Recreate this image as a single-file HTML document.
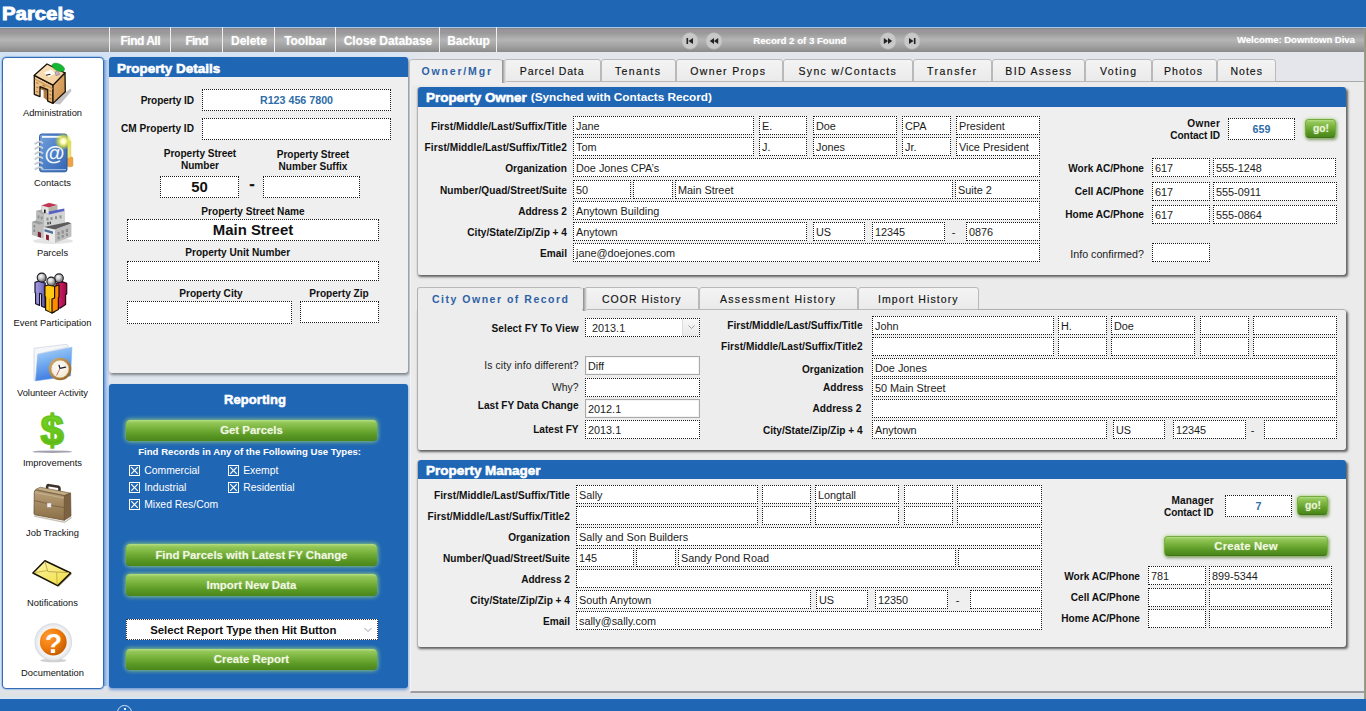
<!DOCTYPE html>
<html><head><meta charset="utf-8"><title>Parcels</title>
<style>
html,body{margin:0;padding:0;}
body{width:1366px;height:711px;overflow:hidden;background:#e4e4e4;font-family:"Liberation Sans",sans-serif;font-size:11px;color:#000;}
#root{position:relative;width:1366px;height:711px;overflow:hidden;background:#dfe6ee;}
#root div{position:absolute;box-sizing:border-box;white-space:nowrap;}
.f{border:1px dotted #1a1a1a;background:#fff;font-size:10.85px;color:#1c1c1c;padding-left:2px;padding-top:1px;overflow:hidden;}
.fs{border:1px solid #a9a9a9;box-shadow:inset 0 0 0 1px #f4f4f4;background:#fff;font-size:10.85px;color:#1c1c1c;padding-left:2px;padding-top:1px;overflow:hidden;}
.fc{text-align:center;padding-left:0;}
.lb{font-size:11px;font-weight:bold;color:#111;}
.ln{font-size:11px;font-weight:normal;color:#111;}
.hv{font-weight:bold;-webkit-text-stroke:0.55px currentColor;}
.ph{background:#1f66b5;color:#fff;border-radius:3px 3px 0 0;}
.pb{background:#efefef;}
.gb{color:#fff;font-weight:bold;font-size:12px;text-align:center;border-radius:4px;
 background:linear-gradient(#b6de86 0%,#94c85a 12%,#78b23c 40%,#5c9a26 70%,#4a861a 100%);
 box-shadow:0 0 4px 1px rgba(170,225,110,0.75);text-shadow:0 0 2px rgba(255,255,255,0.35);}
.gb2{box-shadow:0 0 3px 1px rgba(150,205,95,.55),1px 2px 3px rgba(50,80,25,.55);border:1px solid rgba(120,175,70,.9);border-bottom-color:#3f7416;}
.tab{border:1px solid #b9b9b9;border-radius:3px 3px 0 0;background:linear-gradient(#f4f4f4,#eaeaea);}
.tb{height:25px;top:27px;border-left:1px solid #efefef;}
</style></head><body><div id="root">
<div style="left:0px;top:0px;width:1366px;height:27px;background:#1f66b5;"></div>
<div class="hv" style="left:2px;top:2px;height:24px;line-height:24px;font-size:18px;color:#fff;transform-origin:0 50%;transform:scaleX(1.13);-webkit-text-stroke:0.9px #fff;">Parcels</div>
<div style="left:0px;top:27px;width:1366px;height:25px;background:linear-gradient(#a9c9e8 0,#a9c9e8 1px,#808a84 1px,#9d939d 3px,#999 6px,#b5b5b5 13px,#a2a2a2 19px,#8a8a8a 25px);"></div>
<div class="tb" style="left:109px;width:61px;"></div>
<div style="left:120.50px;top:33px;height:16px;line-height:16px;font-size:12px;font-weight:bold;letter-spacing:-0.507px;color:#fff;text-shadow:0 0 2px rgba(255,255,255,.45);">Find All</div>
<div class="tb" style="left:170px;width:52px;"></div>
<div style="left:185.50px;top:33px;height:16px;line-height:16px;font-size:12px;font-weight:bold;letter-spacing:-0.775px;color:#fff;text-shadow:0 0 2px rgba(255,255,255,.45);">Find</div>
<div class="tb" style="left:222px;width:52px;"></div>
<div style="left:231.00px;top:33px;height:16px;line-height:16px;font-size:12px;font-weight:bold;letter-spacing:-0.004px;color:#fff;text-shadow:0 0 2px rgba(255,255,255,.45);">Delete</div>
<div class="tb" style="left:274px;width:61px;"></div>
<div style="left:284.25px;top:33px;height:16px;line-height:16px;font-size:12px;font-weight:bold;letter-spacing:-0.101px;color:#fff;text-shadow:0 0 2px rgba(255,255,255,.45);">Toolbar</div>
<div class="tb" style="left:335px;width:104px;"></div>
<div style="left:343.75px;top:33px;height:16px;line-height:16px;font-size:12px;font-weight:bold;letter-spacing:-0.067px;color:#fff;text-shadow:0 0 2px rgba(255,255,255,.45);">Close Database</div>
<div class="tb" style="left:439px;width:57px;"></div>
<div style="left:447.25px;top:33px;height:16px;line-height:16px;font-size:12px;font-weight:bold;letter-spacing:-0.170px;color:#fff;text-shadow:0 0 2px rgba(255,255,255,.45);">Backup</div>
<div class="tb" style="left:496px;width:1px;"></div>
<div style="left:681px;top:32px;width:18px;height:18px;"><svg width="18" height="18" viewBox="0 0 18 18" style="position:absolute;left:0;top:0"><circle cx="9" cy="9" r="8.2" fill="#c9c9c9" stroke="#b4b4b4" stroke-width="0.8"/><rect x="5.5" y="6" width="1.6" height="6" fill="#222"/><path d="M12 6 L7.5 9 L12 12Z" fill="#222"/></svg></div>
<div style="left:705px;top:32px;width:18px;height:18px;"><svg width="18" height="18" viewBox="0 0 18 18" style="position:absolute;left:0;top:0"><circle cx="9" cy="9" r="8.2" fill="#c9c9c9" stroke="#b4b4b4" stroke-width="0.8"/><path d="M9 6 L4.8 9 L9 12Z M13.2 6 L9 9 L13.2 12Z" fill="#222"/></svg></div>
<div style="left:879px;top:32px;width:18px;height:18px;"><svg width="18" height="18" viewBox="0 0 18 18" style="position:absolute;left:0;top:0"><circle cx="9" cy="9" r="8.2" fill="#c9c9c9" stroke="#b4b4b4" stroke-width="0.8"/><path d="M9 6 L13.2 9 L9 12Z M4.8 6 L9 9 L4.8 12Z" fill="#222"/></svg></div>
<div style="left:903px;top:32px;width:18px;height:18px;"><svg width="18" height="18" viewBox="0 0 18 18" style="position:absolute;left:0;top:0"><circle cx="9" cy="9" r="8.2" fill="#c9c9c9" stroke="#b4b4b4" stroke-width="0.8"/><rect x="10.9" y="6" width="1.6" height="6" fill="#222"/><path d="M6 6 L10.5 9 L6 12Z" fill="#222"/></svg></div>
<div style="left:753.20px;top:34px;height:13px;line-height:13px;font-size:9.7px;font-weight:bold;letter-spacing:-0.021px;color:#fff;text-shadow:0 0 2px rgba(255,255,255,.4);">Record 2 of 3 Found</div>
<div style="left:1237.00px;top:33.5px;height:12px;line-height:12px;font-size:9.6px;font-weight:bold;letter-spacing:-0.062px;color:#fff;text-shadow:0 0 2px rgba(255,255,255,.4);">Welcome: Downtown Diva</div>
<div style="left:0px;top:52px;width:1366px;height:30px;background:linear-gradient(90deg,#d3e2f5 0,#d8e5f4 29%,#e3e6ea 31%,#e4e6ec 100%);"></div>
<div style="left:0px;top:688px;width:1366px;height:11px;background:linear-gradient(#e0e4ea 0,#dfe1e4 60%,#d6e6f2 100%);"></div>
<div style="left:0px;top:699px;width:1366px;height:12px;background:#1f66b5;"></div>
<div style="left:117px;top:705px;width:15px;height:15px;border:1.5px solid #d4e4f8;border-radius:50%;"></div>
<div style="left:123.5px;top:708px;width:2px;height:2px;background:#e8f0fa;"></div>
<div style="left:1364px;top:28px;width:2px;height:671px;background:linear-gradient(90deg,#a0a28e,#8e907e);z-index:5;"></div>
<div style="left:1px;top:56px;width:104px;height:634px;border-radius:6px;background:rgba(120,170,225,0.35);"></div>
<div style="left:104px;top:60px;width:5px;height:626px;background:linear-gradient(90deg,#5e90d4,#9dbdea 35%,#c6d6f0 75%,#d4dff0);"></div>
<div style="left:2px;top:57px;width:102px;height:632px;background:#fff;border:1px solid #346cb4;border-radius:4px;box-shadow:0 0 2px #7fb0e6;"></div>
<div style="left:22px;top:58px;width:62px;height:50px;"><svg width="62" height="50" viewBox="0 0 62 50" style="display:block">
<defs><linearGradient id="wd1" x1="0" y1="0" x2="1" y2="1"><stop offset="0" stop-color="#fbe6c6"/><stop offset="1" stop-color="#f0c890"/></linearGradient>
<linearGradient id="wd2" x1="0" y1="0" x2="0" y2="1"><stop offset="0" stop-color="#f2cc98"/><stop offset="1" stop-color="#e2b070"/></linearGradient>
<linearGradient id="wd3" x1="0" y1="0" x2="1" y2="1"><stop offset="0" stop-color="#e6b474"/><stop offset="1" stop-color="#c88a48"/></linearGradient></defs>
<path d="M32 45.6 L43.4 34.2 L48.8 30.6 L49.4 33 L38 46.4Z" fill="#b4b4b8" opacity=".8"/>
<path d="M21.6 30.2 L25.7 31.8 L25.7 43 L21.6 39.6Z" fill="#b07c3c"/><path d="M18 28.8 L25.7 31.8 L25.7 34 L18 31Z" fill="#9c6a30"/>
<path d="M12.3 17.3 L31 27.1 L31 45.4 L25.7 43.1 L25.7 31.6 L18 28.6 L18 38.6 L12.3 36.3Z" fill="url(#wd2)" stroke="#1c1208" stroke-width="1.3" stroke-linejoin="round"/>
<path d="M31 27.1 L43 14.8 L43.3 33.8 L31 45.4Z" fill="url(#wd3)" stroke="#1c1208" stroke-width="1.3" stroke-linejoin="round"/>
<path d="M12.3 17.3 L25 6 L43 14.8 L31 27.1Z" fill="url(#wd1)" stroke="#1c1208" stroke-width="1.3" stroke-linejoin="round"/>
<path d="M12.8 21 L30.6 30.6" stroke="#c89858" stroke-width="1.2"/>
<path d="M22 14.5 L29 11.5 L33.5 15.5 L26.5 19Z" fill="#fff" opacity=".9"/>
<path d="M24 17.3 L28.4 16.3" stroke="#222" stroke-width="1.1"/>
<ellipse cx="36.3" cy="9.3" rx="6.6" ry="3.4" transform="rotate(24 36.3 9.3)" fill="#14b830" stroke="#0c9424" stroke-width=".6"/>
<path d="M33.2 14 L36 12.6 L37.6 16.6 L34 17.6Z" fill="#c4b4c4" stroke="#7a6a7a" stroke-width=".5"/>
<path d="M14.3 24.6 L16.3 25.6 M14.3 29 L16.3 30 M14.3 33.2 L16.3 34.2 M27.4 36.3 L29.4 37.3 M27.4 40 L29.4 41 M27.4 32.6 L29.4 33.6 M20.4 27 L23.4 28.4" stroke="#a87838" stroke-width="1.1"/>
</svg></div>
<div style="left:22px;top:128px;width:62px;height:50px;"><svg width="62" height="50" viewBox="0 0 62 50" style="display:block">
<defs><linearGradient id="bk" x1="0" y1="0" x2="1" y2="1"><stop offset="0" stop-color="#74a2dc"/><stop offset=".5" stop-color="#4e80c8"/><stop offset="1" stop-color="#3566b4"/></linearGradient>
<radialGradient id="sp"><stop offset="0" stop-color="#fff"/><stop offset=".3" stop-color="#fdf9b0"/><stop offset=".6" stop-color="#dde23a" stop-opacity=".75"/><stop offset="1" stop-color="#c8dc30" stop-opacity="0"/></radialGradient></defs>
<rect x="45" y="29" width="5.8" height="9.6" rx="1.4" fill="#f0a244" stroke="#d48820" stroke-width=".6"/>
<rect x="44" y="13" width="4.8" height="17" rx="1.4" fill="#ece468" stroke="#c8c040" stroke-width=".5"/>
<rect x="17.6" y="6" width="27.4" height="37.8" rx="2.2" fill="url(#bk)" stroke="#2c5aa2" stroke-width="1"/>
<path d="M19.5 41.6 L44 41.6" stroke="#9ab8e0" stroke-width="1.2"/>
<path d="M20 8.9 L39.6 8.9" stroke="#f4f8fc" stroke-width="1.8"/>
<g fill="none" stroke="#d4d8dc" stroke-width="1.7" stroke-linecap="round"><path d="M13 15.5 q4 -3.4 7.4 -.6"/><path d="M13 20.6 q4 -3.4 7.4 -.6"/><path d="M13 25.7 q4 -3.4 7.4 -.6"/><path d="M13 30.8 q4 -3.4 7.4 -.6"/><path d="M13 35.9 q4 -3.4 7.4 -.6"/><path d="M13 41 q4 -3.4 7.4 -.6"/></g>
<g fill="none" stroke="#8a96a4" stroke-width=".5"><path d="M13 16.4 q4 -3.4 7.4 -.6"/><path d="M13 21.5 q4 -3.4 7.4 -.6"/><path d="M13 26.6 q4 -3.4 7.4 -.6"/><path d="M13 31.7 q4 -3.4 7.4 -.6"/><path d="M13 36.8 q4 -3.4 7.4 -.6"/><path d="M13 41.9 q4 -3.4 7.4 -.6"/></g>
<text x="32.4" y="32.4" font-family="Liberation Sans" font-weight="bold" font-size="20.5" fill="#f2f7fd" text-anchor="middle">@</text>
<circle cx="41.4" cy="13.4" r="8.6" fill="url(#sp)"/>
</svg></div>
<div style="left:22px;top:198px;width:62px;height:50px;"><svg width="62" height="50" viewBox="0 0 62 50" style="display:block">
<ellipse cx="31" cy="43" rx="20" ry="3" fill="#d8d8d8" opacity=".7"/>
<path d="M14 13 L22 11 L22 40 L14 36Z" fill="#c4c4c4"/><path d="M14 13 L22 11 L30 14 L22 17Z" fill="#a8a8a8"/>
<path d="M22 16 L43 12.5 L43 27 L22 30Z" fill="#d2d4d4"/>
<path d="M14.5 15 L22 17.5 L22 29 L14.5 26.5Z" fill="#b9bbbb"/>
<path d="M19.7 7.5 L27 5 L35.2 7 L35.2 13.5 L26.5 16 L19.7 14Z" fill="#e4e4e4" stroke="#9a9a9a" stroke-width=".4"/>
<path d="M19.7 7.4 L27 5 L35.2 7 L27 9.6Z" fill="#c23452"/>
<path d="M26.6 9.8 L35.2 7.2 L35.2 13.5 L26.6 16Z" fill="#b4b4a8"/>
<rect x="22" y="11.6" width="1.6" height="3.2" fill="#111"/>
<path d="M26.8 13.6 L42.3 10.4 L42.3 13 L26.8 16.4Z" fill="#5661c4"/>
<path d="M9.9 24 L14 22.4 L21.8 25 L21.8 40.8 L9.9 37Z" fill="#bcbcbc"/>
<path d="M9.9 24 L14 22.4 L21.8 25 L17.5 26.6Z" fill="#9c9c9c"/>
<path d="M15.8 33.6 L19 34.7 L19 39.8 L15.8 38.7Z" fill="#7c2034"/>
<path d="M21.8 29 L46 24 L49.3 25.5 L49.3 38.5 L33 45 L21.8 40.8Z" fill="#e0e0e0"/>
<path d="M21.8 29 L46 24 L49.3 25.5 L33 31.6Z" fill="#5c5c5c"/>
<path d="M33 31.6 L49.3 25.5 L49.3 38.5 L33 45Z" fill="#bdbdbd"/>
<path d="M21.8 29.4 L33 32 L33 45 L21.8 40.8Z" fill="#ececec"/>
<path d="M22.5 31 L31 33.4 L31 36 L22.5 33.6Z" fill="#51709c"/>
<path d="M24 36.4 L26.9 37.3 L26.9 42.6 L24 41.6Z" fill="#8a1c30"/>
<g fill="#8e9090"><rect x="15.6" y="17.5" width="1.8" height="2.8"/><rect x="18.8" y="18.6" width="1.8" height="2.8"/><rect x="24.5" y="19.6" width="2" height="3"/><rect x="28.5" y="19" width="2" height="3"/><rect x="33" y="18.2" width="2" height="3"/><rect x="37.5" y="17.4" width="2" height="3"/><rect x="25.3" y="24" width="1.4" height="2.6" fill="#444"/><rect x="27.6" y="23.6" width="1.4" height="2.6" fill="#444"/>
<rect x="35.5" y="34" width="2.2" height="3.2"/><rect x="39.6" y="32.4" width="2.2" height="3.2"/><rect x="43.8" y="30.8" width="2.2" height="3.2"/><rect x="35.5" y="38.6" width="2.2" height="2.6"/><rect x="39.6" y="37" width="2.2" height="2.6"/><rect x="43.8" y="35.4" width="2.2" height="2.6"/><rect x="11.4" y="27" width="1.8" height="2.6"/><rect x="11.4" y="31.4" width="1.8" height="2.6"/></g>
</svg></div>
<div style="left:22px;top:268px;width:62px;height:50px;"><svg width="62" height="50" viewBox="0 0 62 50" style="display:block">
<defs><radialGradient id="hd" cx=".4" cy=".35"><stop offset="0" stop-color="#fafafa"/><stop offset=".6" stop-color="#c8c8c8"/><stop offset="1" stop-color="#8a8a8a"/></radialGradient>
<linearGradient id="p1" x1="0" x2="1"><stop offset="0" stop-color="#a8a0e4"/><stop offset=".7" stop-color="#8076c8"/><stop offset="1" stop-color="#564c9c"/></linearGradient>
<linearGradient id="p3" x1="0" x2="1"><stop offset="0" stop-color="#f25aa2"/><stop offset=".35" stop-color="#c81c64"/><stop offset="1" stop-color="#9a0c40"/></linearGradient></defs>
<path d="M13 14.4 L17 13 L23.2 15 L23.2 39.6 L19.6 38.2 L19.6 26 L17.6 25.4 L17.6 37.4 L13.6 35.8 L13.6 25 L13 24.6Z" fill="url(#p1)" stroke="#15132c" stroke-width="1.2" stroke-linejoin="round"/>
<path d="M34 15.6 L40 13.6 L44.7 15.4 L44.7 26 L43.6 26.6 L43.6 36.6 L38 40.2 L34 38.6Z" fill="url(#p3)" stroke="#2a0614" stroke-width="1.2" stroke-linejoin="round"/>
<path d="M22.9 18 L27.4 16.6 L32.6 18.4 L32.6 43.6 L30 45 L23.6 42 L23.6 29 L22.9 28.6Z" fill="#ffc814" stroke="#1c1000" stroke-width="1.2" stroke-linejoin="round"/>
<path d="M32.6 18.4 L37 16.8 L37 29 L36.4 29.4 L36.4 41.4 L32.6 43.6 L30 45 L30 31 L32.6 30Z" fill="#ff8a00" stroke="#1c1000" stroke-width="1.2" stroke-linejoin="round"/>
<path d="M27.4 30.6 L27.4 43.4" stroke="#e0a000" stroke-width="1.2"/>
<circle cx="19.7" cy="9.6" r="4.5" fill="url(#hd)" stroke="#1a1a22" stroke-width="1.1"/>
<circle cx="37" cy="10.2" r="4.3" fill="url(#hd)" stroke="#1a1a22" stroke-width="1.1"/>
<circle cx="29.2" cy="13.4" r="4.3" fill="url(#hd)" stroke="#1a1a22" stroke-width="1.1"/>
</svg></div>
<div style="left:22px;top:338px;width:62px;height:50px;"><svg width="62" height="50" viewBox="0 0 62 50" style="display:block">
<defs><linearGradient id="fo" x1="0" y1="0" x2=".3" y2="1"><stop offset="0" stop-color="#b4d8fa"/><stop offset=".45" stop-color="#78b0f0"/><stop offset="1" stop-color="#3c7ae0"/></linearGradient>
<radialGradient id="ck" cx=".45" cy=".4"><stop offset="0" stop-color="#fff"/><stop offset="1" stop-color="#f3ead8"/></radialGradient>
<linearGradient id="rim" x1="0" y1="0" x2="1" y2="1"><stop offset="0" stop-color="#d8b070"/><stop offset="1" stop-color="#8a5a20"/></linearGradient></defs>
<path d="M12 10.2 L45 6.3 L46.5 9 L16 16 L14 42.6 L12 42.2Z" fill="#f4f6fa" stroke="#c4ccd8" stroke-width=".6"/>
<path d="M15.8 16.5 L50 9.2 L48.6 38 L13.4 43Z" fill="url(#fo)" stroke="#8ab4ea" stroke-width=".5"/>
<circle cx="38" cy="31" r="11.3" fill="url(#rim)"/>
<circle cx="38" cy="31" r="9" fill="url(#ck)" stroke="#b89050" stroke-width=".6"/>
<path d="M38 30.4 L37 27.2 M38 30.4 L43.6 29.2" stroke="#1c1c30" stroke-width="1.2" stroke-linecap="round"/>
<path d="M38 30.4 L34.6 37.4" stroke="#b83030" stroke-width=".7"/>
</svg></div>
<div style="left:22px;top:408px;width:62px;height:50px;"><svg width="62" height="50" viewBox="0 0 62 50" style="display:block">
<defs><linearGradient id="dl" x1="0" y1="0" x2="0" y2="1"><stop offset="0" stop-color="#7ed62a"/><stop offset=".5" stop-color="#6ac81e"/><stop offset="1" stop-color="#54ac10"/></linearGradient></defs>
<ellipse cx="30.3" cy="43.7" rx="19.8" ry="1.3" fill="#8c8c9c" opacity=".8"/>
<text x="30.2" y="36.6" font-family="Liberation Sans" font-weight="bold" font-size="42" fill="url(#dl)" stroke="#66c41c" stroke-width="1.7" stroke-linejoin="round" text-anchor="middle">$</text>
</svg></div>
<div style="left:22px;top:478px;width:62px;height:50px;"><svg width="62" height="50" viewBox="0 0 62 50" style="display:block">
<defs><linearGradient id="bc" x1="0" y1="0" x2="0" y2="1"><stop offset="0" stop-color="#b8a07a"/><stop offset=".45" stop-color="#a48a62"/><stop offset="1" stop-color="#8a6e46"/></linearGradient></defs>
<path d="M12 37.4 L42.6 43.4 L49.6 38.6 L49.6 40.2 L42.6 45 L12 38.8Z" fill="#b0a898" opacity=".7"/>
<path d="M25 13 L25.2 8.4 Q25.4 7 27 7.2 L36.4 8.8 Q37.6 9.2 37.5 10.6 L37.2 15.4" fill="none" stroke="#3c322a" stroke-width="2.6" stroke-linejoin="round"/>
<path d="M13.6 11.4 L18.3 9.2 L48.6 15.1 L42.3 17.8Z" fill="#c4ac86" stroke="#6a5436" stroke-width=".6"/>
<path d="M42.3 17.6 L48.6 15.1 L49 38 L42.3 42.3Z" fill="#7c6242" stroke="#5c4428" stroke-width=".6"/>
<path d="M12.3 14.2 Q12.3 11.8 14.4 12.2 L42.3 17.6 L42.3 42.3 L13 36.8 Q12 36.6 12 35.2Z" fill="url(#bc)" stroke="#6a5232" stroke-width=".8"/>
<path d="M12.4 22.6 L26 25.6 L29 27.4 L42.3 29.6" fill="none" stroke="#7a6040" stroke-width=".9"/>
<path d="M13 14.6 L42 20" fill="none" stroke="#ccb694" stroke-width=".8"/>
<rect x="25" y="25" width="4.2" height="4.4" fill="#f4f0f0" stroke="#988" stroke-width=".5"/>
</svg></div>
<div style="left:22px;top:548px;width:62px;height:50px;"><svg width="62" height="50" viewBox="0 0 62 50" style="display:block">
<defs><linearGradient id="ev" x1="0" y1="0" x2=".6" y2="1"><stop offset="0" stop-color="#fdf6b0"/><stop offset="1" stop-color="#f2e04c"/></linearGradient></defs>
<path d="M36.6 38.8 L49.8 26 L49.2 25 L35.8 37.8Z" fill="#8a8670"/>
<path d="M10.9 25 L22.9 12.7 L48.6 25 L35.6 37.7Z" fill="url(#ev)" stroke="#181200" stroke-width="1.5" stroke-linejoin="round"/>
<path d="M22.9 13.5 L25.8 23.6 L47 24.6" fill="none" stroke="#b8a048" stroke-width=".9"/>
<path d="M12.6 24.6 L24.6 22.6 M34.6 24.4 L35.2 36.4" fill="none" stroke="#c4ac44" stroke-width=".9"/>
</svg></div>
<div style="left:22px;top:616px;width:62px;height:50px;"><svg width="62" height="50" viewBox="0 0 62 50" style="display:block">
<defs><radialGradient id="rg" cx=".5" cy=".5"><stop offset=".68" stop-color="#fbfbfb"/><stop offset=".92" stop-color="#e6e8ea"/><stop offset="1" stop-color="#d2d6e0"/></radialGradient>
<radialGradient id="og" cx=".32" cy=".3" r=".85"><stop offset="0" stop-color="#ff9c30"/><stop offset=".5" stop-color="#f07c0c"/><stop offset="1" stop-color="#b85400"/></radialGradient></defs>
<ellipse cx="31.3" cy="44.4" rx="13" ry="1.8" fill="#aaa" opacity=".55"/>
<circle cx="31.3" cy="26" r="18.8" fill="url(#rg)"/>
<circle cx="31.3" cy="26" r="13.4" fill="url(#og)"/>
<text x="31.6" y="36.6" font-family="Liberation Sans" font-weight="bold" font-size="28" fill="#fff" text-anchor="middle">?</text>
</svg></div>
<div style="left:22.94px;top:107px;height:12px;line-height:12px;font-size:9.33px;color:#111;">Administration</div>
<div style="left:34.09px;top:177px;height:12px;line-height:12px;font-size:9.33px;color:#111;">Contacts</div>
<div style="left:36.94px;top:247px;height:12px;line-height:12px;font-size:9.33px;color:#111;">Parcels</div>
<div style="left:13.60px;top:317px;height:12px;line-height:12px;font-size:9.33px;color:#111;">Event Participation</div>
<div style="left:16.97px;top:387px;height:12px;line-height:12px;font-size:9.33px;color:#111;">Volunteer Activity</div>
<div style="left:22.94px;top:457px;height:12px;line-height:12px;font-size:9.33px;color:#111;">Improvements</div>
<div style="left:26.05px;top:527px;height:12px;line-height:12px;font-size:9.33px;color:#111;">Job Tracking</div>
<div style="left:27.09px;top:597px;height:12px;line-height:12px;font-size:9.33px;color:#111;">Notifications</div>
<div style="left:21.12px;top:667px;height:12px;line-height:12px;font-size:9.33px;color:#111;">Documentation</div>
<div style="left:109px;top:57px;width:299px;height:316px;background:#efefef;border-radius:3px;box-shadow:1px 2px 3px rgba(0,0,0,.45);"></div>
<div class="ph" style="left:109px;top:57px;width:299px;height:20px;"></div>
<div class="hv" style="left:116.7px;top:59.5px;height:18px;line-height:18px;font-size:13px;color:#fff;transform-origin:0 50%;transform:scaleX(1.035);">Property Details</div>
<div style="left:140.70px;top:94px;height:13px;line-height:13px;font-size:10.1px;font-weight:bold;letter-spacing:-0.114px;color:#111;">Property ID</div>
<div class="f fc" style="left:202px;top:89px;width:189px;height:22px;line-height:20px;color:#2e6da8;font-weight:bold;font-size:10.7px;padding-top:0;">R123 456 7800</div>
<div style="left:121.05px;top:122px;height:13px;line-height:13px;font-size:10.1px;font-weight:bold;color:#111;">CM Property ID</div>
<div class="f" style="left:202px;top:118px;width:189px;height:22px;line-height:20px;"></div>
<div style="left:163.75px;top:147.3px;height:13px;line-height:13px;font-size:10.1px;font-weight:bold;letter-spacing:-0.034px;color:#111;">Property Street</div>
<div style="left:180.92px;top:159.3px;height:13px;line-height:13px;font-size:10.1px;font-weight:bold;color:#111;">Number</div>
<div style="left:276.75px;top:148.3px;height:13px;line-height:13px;font-size:10.1px;font-weight:bold;letter-spacing:-0.034px;color:#111;">Property Street</div>
<div style="left:278.49px;top:160.2px;height:13px;line-height:13px;font-size:10.1px;font-weight:bold;color:#111;">Number Suffix</div>
<div class="f fc" style="left:160px;top:176px;width:79px;height:22px;line-height:20px;font-weight:bold;font-size:14.9px;color:#111;padding-top:0;">50</div>
<div class="hv" style="left:249.50px;top:173.5px;height:20px;line-height:20px;font-size:15px;font-weight:bold;color:#111;">-</div>
<div class="f" style="left:263px;top:176px;width:97px;height:22px;line-height:20px;"></div>
<div style="left:201.36px;top:204.5px;height:13px;line-height:13px;font-size:10.1px;font-weight:bold;color:#111;">Property Street Name</div>
<div class="f fc" style="left:127px;top:219px;width:252px;height:22px;line-height:20px;font-weight:bold;font-size:14.9px;color:#111;padding-top:0;">Main Street</div>
<div style="left:185.23px;top:246.2px;height:13px;line-height:13px;font-size:10.1px;font-weight:bold;color:#111;">Property Unit Number</div>
<div class="f" style="left:127px;top:261px;width:252px;height:20px;line-height:18px;"></div>
<div style="left:179.29px;top:286.5px;height:13px;line-height:13px;font-size:10.1px;font-weight:bold;color:#111;">Property City</div>
<div style="left:309.26px;top:286.5px;height:13px;line-height:13px;font-size:10.1px;font-weight:bold;color:#111;">Property Zip</div>
<div class="f" style="left:127px;top:301px;width:165px;height:23px;line-height:21px;"></div>
<div class="f" style="left:300px;top:301px;width:79px;height:22px;line-height:20px;"></div>
<div style="left:109px;top:384px;width:299px;height:304px;background:#1f66b5;border-radius:3px;box-shadow:0 2px 3px rgba(90,140,210,.8);"></div>
<div class="hv" style="left:224.00px;top:391.3px;height:17px;line-height:17px;font-size:13px;font-weight:bold;letter-spacing:0.077px;color:#fff;">Reporting</div>
<div class="gb" style="left:126px;top:420px;width:251px;height:21px;"></div>
<div style="left:220.13px;top:423px;height:15px;line-height:15px;font-size:11.4px;font-weight:bold;color:#f2f9e2;text-shadow:0 0 2px rgba(255,255,255,.35);">Get Parcels</div>
<div style="left:138.20px;top:446px;height:12px;line-height:12px;font-size:9.6px;font-weight:bold;letter-spacing:0.013px;color:#fff;">Find Records in Any of the Following Use Types:</div>
<div style="left:129px;top:465px;width:11px;height:11px;border:1px solid #fff;"><svg width="9" height="9" viewBox="0 0 9 9" style="display:block"><path d="M1.2 1.2 L7.8 7.8 M7.8 1.2 L1.2 7.8" stroke="#fff" stroke-width="1.2"/></svg></div>
<div style="left:144.20px;top:463.5px;height:14px;line-height:14px;font-size:10.4px;color:#fff;">Commercial</div>
<div style="left:228px;top:465px;width:11px;height:11px;border:1px solid #fff;"><svg width="9" height="9" viewBox="0 0 9 9" style="display:block"><path d="M1.2 1.2 L7.8 7.8 M7.8 1.2 L1.2 7.8" stroke="#fff" stroke-width="1.2"/></svg></div>
<div style="left:243.20px;top:463.5px;height:14px;line-height:14px;font-size:10.4px;color:#fff;">Exempt</div>
<div style="left:129px;top:482px;width:11px;height:11px;border:1px solid #fff;"><svg width="9" height="9" viewBox="0 0 9 9" style="display:block"><path d="M1.2 1.2 L7.8 7.8 M7.8 1.2 L1.2 7.8" stroke="#fff" stroke-width="1.2"/></svg></div>
<div style="left:144.20px;top:480.5px;height:14px;line-height:14px;font-size:10.4px;color:#fff;">Industrial</div>
<div style="left:228px;top:482px;width:11px;height:11px;border:1px solid #fff;"><svg width="9" height="9" viewBox="0 0 9 9" style="display:block"><path d="M1.2 1.2 L7.8 7.8 M7.8 1.2 L1.2 7.8" stroke="#fff" stroke-width="1.2"/></svg></div>
<div style="left:243.20px;top:480.5px;height:14px;line-height:14px;font-size:10.4px;color:#fff;">Residential</div>
<div style="left:129px;top:499px;width:11px;height:11px;border:1px solid #fff;"><svg width="9" height="9" viewBox="0 0 9 9" style="display:block"><path d="M1.2 1.2 L7.8 7.8 M7.8 1.2 L1.2 7.8" stroke="#fff" stroke-width="1.2"/></svg></div>
<div style="left:144.20px;top:497.5px;height:14px;line-height:14px;font-size:10.4px;color:#fff;">Mixed Res/Com</div>
<div class="gb" style="left:126px;top:544px;width:251px;height:22px;"></div>
<div style="left:155.40px;top:547.5px;height:15px;line-height:15px;font-size:11.4px;font-weight:bold;letter-spacing:-0.024px;color:#f2f9e2;text-shadow:0 0 2px rgba(255,255,255,.35);">Find Parcels with Latest FY Change</div>
<div class="gb" style="left:126px;top:574px;width:251px;height:22px;"></div>
<div style="left:206.53px;top:577.5px;height:15px;line-height:15px;font-size:11.4px;font-weight:bold;color:#f2f9e2;text-shadow:0 0 2px rgba(255,255,255,.35);">Import New Data</div>
<div class="f" style="left:126px;top:619px;width:252px;height:21px;line-height:19px;border:1px dotted #333;"></div>
<div style="left:150.20px;top:623px;height:15px;line-height:15px;font-size:11.4px;font-weight:bold;letter-spacing:-0.045px;color:#111;">Select Report Type then Hit Button</div>
<div style="left:363px;top:626px;width:10px;height:8px;"><svg width="10" height="8" viewBox="0 0 10 8" style="display:block"><path d="M1.5 2 L5 5.5 L8.5 2" fill="none" stroke="#9a9a9a" stroke-width="1"/></svg></div>
<div class="gb" style="left:126px;top:649px;width:251px;height:21px;"></div>
<div style="left:213.81px;top:652px;height:15px;line-height:15px;font-size:11.4px;font-weight:bold;color:#f2f9e2;text-shadow:0 0 2px rgba(255,255,255,.35);">Create Report</div>
<div style="left:410px;top:81px;width:956px;height:612px;background:#ebebeb;border-top:1px solid #ababab;border-right:2px solid #9c9e8c;border-bottom:2px solid #9d9da3;border-left:1px solid #f2f4f6;"></div>
<div style="left:410px;top:59px;width:92px;height:26px;background:#efefef;border-top:1px solid #b8b8b8;border-radius:3px 3px 0 0;z-index:2;"></div>
<div style="left:502px;top:60px;width:4px;height:23px;background:linear-gradient(90deg,#8a8a8a,#adadad 35%,#d0d0d0 70%,#e6e6e6);border-radius:0 2px 0 0;z-index:2;"></div>
<div style="left:421.50px;top:63.6px;height:14px;line-height:14px;font-size:10.5px;font-weight:bold;letter-spacing:1.833px;color:#2d62a6;z-index:3;">Owner/Mgr</div>
<div class="tab" style="left:504px;top:59px;width:97px;height:23px;"></div>
<div style="left:519.80px;top:63.6px;height:14px;line-height:14px;font-size:10.5px;letter-spacing:0.884px;color:#111;z-index:3;-webkit-text-stroke:0.15px #111;">Parcel Data</div>
<div class="tab" style="left:601px;top:59px;width:75px;height:23px;"></div>
<div style="left:614.90px;top:63.6px;height:14px;line-height:14px;font-size:10.5px;letter-spacing:1.371px;color:#111;z-index:3;-webkit-text-stroke:0.15px #111;">Tenants</div>
<div class="tab" style="left:676px;top:59px;width:107px;height:23px;"></div>
<div style="left:690.30px;top:63.6px;height:14px;line-height:14px;font-size:10.5px;letter-spacing:1.333px;color:#111;z-index:3;-webkit-text-stroke:0.15px #111;">Owner Props</div>
<div class="tab" style="left:783px;top:59px;width:130px;height:23px;"></div>
<div style="left:798.40px;top:63.6px;height:14px;line-height:14px;font-size:10.5px;letter-spacing:1.372px;color:#111;z-index:3;-webkit-text-stroke:0.15px #111;">Sync w/Contacts</div>
<div class="tab" style="left:913px;top:59px;width:79px;height:23px;"></div>
<div style="left:927.00px;top:63.6px;height:14px;line-height:14px;font-size:10.5px;letter-spacing:1.485px;color:#111;z-index:3;-webkit-text-stroke:0.15px #111;">Transfer</div>
<div class="tab" style="left:992px;top:59px;width:93px;height:23px;"></div>
<div style="left:1005.30px;top:63.6px;height:14px;line-height:14px;font-size:10.5px;letter-spacing:1.346px;color:#111;z-index:3;-webkit-text-stroke:0.15px #111;">BID Assess</div>
<div class="tab" style="left:1085px;top:59px;width:67px;height:23px;"></div>
<div style="left:1099.90px;top:63.6px;height:14px;line-height:14px;font-size:10.5px;letter-spacing:1.421px;color:#111;z-index:3;-webkit-text-stroke:0.15px #111;">Voting</div>
<div class="tab" style="left:1152px;top:59px;width:65px;height:23px;"></div>
<div style="left:1164.00px;top:63.6px;height:14px;line-height:14px;font-size:10.5px;letter-spacing:1.062px;color:#111;z-index:3;-webkit-text-stroke:0.15px #111;">Photos</div>
<div class="tab" style="left:1217px;top:59px;width:59px;height:23px;"></div>
<div style="left:1230.50px;top:63.6px;height:14px;line-height:14px;font-size:10.5px;letter-spacing:0.993px;color:#111;z-index:3;-webkit-text-stroke:0.15px #111;">Notes</div>
<div style="left:417px;top:87px;width:929px;height:188px;background:#efefef;border-left:1px solid #b4b4b4;border-radius:3px;box-shadow:1.5px 2px 2.5px rgba(0,0,0,.6);"></div>
<div class="ph" style="left:418px;top:87px;width:928px;height:20px;"></div>
<div class="hv" style="left:425.6px;top:87.5px;height:20px;line-height:20px;font-size:13px;color:#fff;transform-origin:0 50%;transform:scaleX(1.0325);">Property Owner</div>
<div style="left:530.80px;top:90px;height:15px;line-height:15px;font-size:11.8px;font-weight:bold;letter-spacing:-0.014px;color:#fff;">(Synched with Contacts Record)</div>
<div style="left:431.00px;top:119.8px;height:13px;line-height:13px;font-size:10.1px;font-weight:bold;letter-spacing:0.052px;color:#111;">First/Middle/Last/Suffix/Title</div>
<div style="left:424.60px;top:140.8px;height:13px;line-height:13px;font-size:10.1px;font-weight:bold;letter-spacing:0.076px;color:#111;">First/Middle/Last/Suffix/Title2</div>
<div style="left:505.28px;top:161.8px;height:13px;line-height:13px;font-size:10.1px;font-weight:bold;color:#111;">Organization</div>
<div style="left:440.00px;top:183.8px;height:13px;line-height:13px;font-size:10.1px;font-weight:bold;letter-spacing:0.056px;color:#111;">Number/Quad/Street/Suite</div>
<div style="left:518.16px;top:204.8px;height:13px;line-height:13px;font-size:10.1px;font-weight:bold;color:#111;">Address 2</div>
<div style="left:467.30px;top:225.8px;height:13px;line-height:13px;font-size:10.1px;font-weight:bold;letter-spacing:0.004px;color:#111;">City/State/Zip/Zip + 4</div>
<div style="left:540.05px;top:246.8px;height:13px;line-height:13px;font-size:10.1px;font-weight:bold;color:#111;">Email</div>
<div class="f" style="left:573px;top:116px;width:181px;height:19px;line-height:17px;">Jane</div>
<div class="f" style="left:759px;top:116px;width:48px;height:19px;line-height:17px;">E.</div>
<div class="f" style="left:813px;top:116px;width:84px;height:19px;line-height:17px;">Doe</div>
<div class="f" style="left:902px;top:116px;width:49px;height:19px;line-height:17px;">CPA</div>
<div class="f" style="left:956px;top:116px;width:84px;height:19px;line-height:17px;">President</div>
<div class="f" style="left:573px;top:137px;width:181px;height:19px;line-height:17px;">Tom</div>
<div class="f" style="left:759px;top:137px;width:48px;height:19px;line-height:17px;">J.</div>
<div class="f" style="left:813px;top:137px;width:84px;height:19px;line-height:17px;">Jones</div>
<div class="f" style="left:902px;top:137px;width:49px;height:19px;line-height:17px;">Jr.</div>
<div class="f" style="left:956px;top:137px;width:84px;height:19px;line-height:17px;">Vice President</div>
<div class="f" style="left:573px;top:158px;width:467px;height:19px;line-height:17px;">Doe Jones CPA’s</div>
<div class="f" style="left:573px;top:180px;width:58px;height:19px;line-height:17px;">50</div>
<div class="f" style="left:633px;top:180px;width:40px;height:19px;line-height:17px;"></div>
<div class="f" style="left:675px;top:180px;width:278px;height:19px;line-height:17px;">Main Street</div>
<div class="f" style="left:955px;top:180px;width:85px;height:19px;line-height:17px;">Suite 2</div>
<div class="f" style="left:573px;top:201px;width:467px;height:19px;line-height:17px;">Anytown Building</div>
<div class="f" style="left:573px;top:222px;width:234px;height:19px;line-height:17px;">Anytown</div>
<div class="f" style="left:813px;top:222px;width:52px;height:19px;line-height:17px;">US</div>
<div class="f" style="left:872px;top:222px;width:73px;height:19px;line-height:17px;">12345</div>
<div style="left:951.67px;top:225px;height:14px;line-height:14px;font-size:11px;color:#222;">-</div>
<div class="f" style="left:966px;top:222px;width:74px;height:19px;line-height:17px;">0876</div>
<div class="f" style="left:573px;top:243px;width:467px;height:19px;line-height:17px;">jane@doejones.com</div>
<div style="left:1187.30px;top:117.4px;height:13px;line-height:13px;font-size:10.1px;font-weight:bold;letter-spacing:0.318px;color:#111;">Owner</div>
<div style="left:1170.30px;top:129.4px;height:13px;line-height:13px;font-size:10.1px;font-weight:bold;letter-spacing:-0.089px;color:#111;">Contact ID</div>
<div class="f fc" style="left:1228px;top:118px;width:67px;height:22px;line-height:20px;color:#2e6da8;font-weight:bold;font-size:10.7px;padding-top:0;">659</div>
<div class="gb gb2" style="left:1305px;top:119px;width:31px;height:19px;"></div>
<div style="left:1312.99px;top:122px;height:13px;line-height:13px;font-size:10.3px;font-weight:bold;color:#eef6dc;text-shadow:0 0 2px rgba(255,255,255,.35);">go!</div>
<div style="left:1068.24px;top:161.5px;height:13px;line-height:13px;font-size:10.1px;font-weight:bold;color:#111;">Work AC/Phone</div>
<div class="f" style="left:1152px;top:158px;width:58px;height:19px;line-height:17px;">617</div>
<div class="f" style="left:1213px;top:158px;width:123px;height:19px;line-height:17px;">555-1248</div>
<div style="left:1074.79px;top:185px;height:13px;line-height:13px;font-size:10.1px;font-weight:bold;color:#111;">Cell AC/Phone</div>
<div class="f" style="left:1152px;top:182px;width:58px;height:19px;line-height:17px;">617</div>
<div class="f" style="left:1213px;top:182px;width:124px;height:19px;line-height:17px;">555-0911</div>
<div style="left:1065.25px;top:208px;height:13px;line-height:13px;font-size:10.1px;font-weight:bold;color:#111;">Home AC/Phone</div>
<div class="f" style="left:1152px;top:205px;width:58px;height:19px;line-height:17px;">617</div>
<div class="f" style="left:1213px;top:205px;width:124px;height:19px;line-height:17px;">555-0864</div>
<div style="left:1070.30px;top:246.5px;height:14px;line-height:14px;font-size:10.7px;letter-spacing:-0.004px;color:#222;">Info confirmed?</div>
<div class="f" style="left:1152px;top:243px;width:58px;height:19px;line-height:17px;"></div>
<div style="left:417px;top:309px;width:929px;height:141px;background:#ededed;border-top:1px solid #b0b0b0;border-left:1px solid #b0b0b0;border-radius:0 3px 3px 3px;box-shadow:1.5px 2px 2.5px rgba(0,0,0,.6);"></div>
<div style="left:418px;top:287px;width:165px;height:26px;background:#ededed;border-top:1px solid #b8b8b8;border-left:1px solid #b0b0b0;margin-left:-1px;border-radius:3px 3px 0 0;z-index:2;"></div>
<div style="left:583px;top:288px;width:4px;height:23px;background:linear-gradient(90deg,#8a8a8a,#adadad 35%,#d0d0d0 70%,#e6e6e6);border-radius:0 2px 0 0;z-index:2;"></div>
<div style="left:432.00px;top:291.8px;height:14px;line-height:14px;font-size:10.5px;font-weight:bold;letter-spacing:1.508px;color:#2d62a6;z-index:3;">City Owner of Record</div>
<div class="tab" style="left:584px;top:287px;width:115px;height:23px;"></div>
<div style="left:602.00px;top:291.8px;height:14px;line-height:14px;font-size:10.5px;letter-spacing:1.038px;color:#111;z-index:3;-webkit-text-stroke:0.15px #111;">COOR History</div>
<div class="tab" style="left:699px;top:287px;width:159px;height:23px;"></div>
<div style="left:720.00px;top:291.8px;height:14px;line-height:14px;font-size:10.5px;letter-spacing:1.307px;color:#111;z-index:3;-webkit-text-stroke:0.15px #111;">Assessment History</div>
<div class="tab" style="left:858px;top:287px;width:121px;height:23px;"></div>
<div style="left:878.00px;top:291.8px;height:14px;line-height:14px;font-size:10.5px;letter-spacing:1.089px;color:#111;z-index:3;-webkit-text-stroke:0.15px #111;">Import History</div>
<div style="left:491.40px;top:321.8px;height:13px;line-height:13px;font-size:10.1px;font-weight:bold;letter-spacing:0.117px;color:#111;">Select FY To View</div>
<div class="f" style="left:585px;top:318px;width:115px;height:19px;line-height:17px;padding-left:6px;">2013.1</div>
<div style="left:682px;top:319px;width:17px;height:17px;background:linear-gradient(#f7f7f7,#e9e9e9);border-left:1px solid #dcdcdc;"><svg width="16" height="17" viewBox="0 0 16 17" style="display:block"><path d="M5.5 6.5 L8.5 9.5 L11.5 6.5" fill="none" stroke="#a0a0a0" stroke-width="1"/></svg></div>
<div style="left:484.30px;top:358.7px;height:14px;line-height:14px;font-size:10.4px;letter-spacing:0.091px;color:#222;">Is city info different?</div>
<div class="fs" style="left:585px;top:356px;width:115px;height:19px;line-height:17px;">Diff</div>
<div style="left:552.02px;top:380.6px;height:14px;line-height:14px;font-size:10.4px;color:#222;">Why?</div>
<div class="f" style="left:585px;top:378px;width:115px;height:19px;line-height:17px;"></div>
<div style="left:477.76px;top:399.3px;height:13px;line-height:13px;font-size:10.1px;font-weight:bold;color:#111;">Last FY Data Change</div>
<div class="fs" style="left:585px;top:399px;width:115px;height:19px;line-height:17px;">2012.1</div>
<div style="left:533.14px;top:423px;height:13px;line-height:13px;font-size:10.1px;font-weight:bold;color:#111;">Latest FY</div>
<div class="f" style="left:585px;top:420px;width:115px;height:19px;line-height:17px;">2013.1</div>
<div style="left:727.20px;top:319.3px;height:13px;line-height:13px;font-size:10.1px;font-weight:bold;letter-spacing:0.031px;color:#111;">First/Middle/Last/Suffix/Title</div>
<div style="left:721.00px;top:340.3px;height:13px;line-height:13px;font-size:10.1px;font-weight:bold;letter-spacing:0.050px;color:#111;">First/Middle/Last/Suffix/Title2</div>
<div style="left:801.98px;top:362.5px;height:13px;line-height:13px;font-size:10.1px;font-weight:bold;color:#111;">Organization</div>
<div style="left:823.09px;top:381.1px;height:13px;line-height:13px;font-size:10.1px;font-weight:bold;color:#111;">Address</div>
<div style="left:812.56px;top:402.1px;height:13px;line-height:13px;font-size:10.1px;font-weight:bold;color:#111;">Address 2</div>
<div style="left:762.90px;top:423.5px;height:13px;line-height:13px;font-size:10.1px;font-weight:bold;letter-spacing:0.004px;color:#111;">City/State/Zip/Zip + 4</div>
<div class="f" style="left:872px;top:316px;width:182px;height:19px;line-height:17px;">John</div>
<div class="f" style="left:1058px;top:316px;width:49px;height:19px;line-height:17px;">H.</div>
<div class="f" style="left:1111px;top:316px;width:84px;height:19px;line-height:17px;">Doe</div>
<div class="f" style="left:1200px;top:316px;width:49px;height:19px;line-height:17px;"></div>
<div class="f" style="left:1253px;top:316px;width:84px;height:19px;line-height:17px;"></div>
<div class="f" style="left:872px;top:337px;width:182px;height:19px;line-height:17px;"></div>
<div class="f" style="left:1058px;top:337px;width:49px;height:19px;line-height:17px;"></div>
<div class="f" style="left:1111px;top:337px;width:84px;height:19px;line-height:17px;"></div>
<div class="f" style="left:1200px;top:337px;width:49px;height:19px;line-height:17px;"></div>
<div class="f" style="left:1253px;top:337px;width:84px;height:19px;line-height:17px;"></div>
<div class="f" style="left:872px;top:358px;width:465px;height:19px;line-height:17px;">Doe Jones</div>
<div class="f" style="left:872px;top:378px;width:465px;height:19px;line-height:17px;">50 Main Street</div>
<div class="f" style="left:872px;top:399px;width:465px;height:19px;line-height:17px;"></div>
<div class="f" style="left:872px;top:420px;width:235px;height:19px;line-height:17px;">Anytown</div>
<div class="f" style="left:1113px;top:420px;width:52px;height:19px;line-height:17px;">US</div>
<div class="f" style="left:1173px;top:420px;width:73px;height:19px;line-height:17px;">12345</div>
<div style="left:1250.67px;top:423px;height:14px;line-height:14px;font-size:11px;color:#222;">-</div>
<div class="f" style="left:1264px;top:420px;width:73px;height:19px;line-height:17px;"></div>
<div style="left:417px;top:460px;width:929px;height:187px;background:#efefef;border-left:1px solid #b4b4b4;border-radius:3px;box-shadow:1.5px 2px 2.5px rgba(0,0,0,.6);"></div>
<div class="ph" style="left:418px;top:460px;width:928px;height:19px;"></div>
<div class="hv" style="left:425.6px;top:460.5px;height:19px;line-height:19px;font-size:13px;color:#fff;transform-origin:0 50%;transform:scaleX(1.0359);">Property Manager</div>
<div style="left:434.00px;top:488.8px;height:13px;line-height:13px;font-size:10.1px;font-weight:bold;letter-spacing:0.052px;color:#111;">First/Middle/Last/Suffix/Title</div>
<div style="left:427.60px;top:509.8px;height:13px;line-height:13px;font-size:10.1px;font-weight:bold;letter-spacing:0.076px;color:#111;">First/Middle/Last/Suffix/Title2</div>
<div style="left:508.28px;top:530.8px;height:13px;line-height:13px;font-size:10.1px;font-weight:bold;color:#111;">Organization</div>
<div style="left:443.00px;top:551.8px;height:13px;line-height:13px;font-size:10.1px;font-weight:bold;letter-spacing:0.056px;color:#111;">Number/Quad/Street/Suite</div>
<div style="left:521.16px;top:572.8px;height:13px;line-height:13px;font-size:10.1px;font-weight:bold;color:#111;">Address 2</div>
<div style="left:470.30px;top:593.8px;height:13px;line-height:13px;font-size:10.1px;font-weight:bold;letter-spacing:0.004px;color:#111;">City/State/Zip/Zip + 4</div>
<div style="left:543.05px;top:614.8px;height:13px;line-height:13px;font-size:10.1px;font-weight:bold;color:#111;">Email</div>
<div class="f" style="left:576px;top:485px;width:182px;height:19px;line-height:17px;">Sally</div>
<div class="f" style="left:762px;top:485px;width:49px;height:19px;line-height:17px;"></div>
<div class="f" style="left:815px;top:485px;width:84px;height:19px;line-height:17px;">Longtall</div>
<div class="f" style="left:904px;top:485px;width:49px;height:19px;line-height:17px;"></div>
<div class="f" style="left:957px;top:485px;width:85px;height:19px;line-height:17px;"></div>
<div class="f" style="left:576px;top:506px;width:182px;height:19px;line-height:17px;"></div>
<div class="f" style="left:762px;top:506px;width:49px;height:19px;line-height:17px;"></div>
<div class="f" style="left:815px;top:506px;width:84px;height:19px;line-height:17px;"></div>
<div class="f" style="left:904px;top:506px;width:49px;height:19px;line-height:17px;"></div>
<div class="f" style="left:957px;top:506px;width:85px;height:19px;line-height:17px;"></div>
<div class="f" style="left:576px;top:527px;width:466px;height:19px;line-height:17px;">Sally and Son Builders</div>
<div class="f" style="left:576px;top:548px;width:58px;height:19px;line-height:17px;">145</div>
<div class="f" style="left:636px;top:548px;width:40px;height:19px;line-height:17px;"></div>
<div class="f" style="left:678px;top:548px;width:278px;height:19px;line-height:17px;">Sandy Pond Road</div>
<div class="f" style="left:958px;top:548px;width:84px;height:19px;line-height:17px;"></div>
<div class="f" style="left:576px;top:569px;width:466px;height:19px;line-height:17px;"></div>
<div class="f" style="left:576px;top:590px;width:235px;height:19px;line-height:17px;">South Anytown</div>
<div class="f" style="left:816px;top:590px;width:52px;height:19px;line-height:17px;">US</div>
<div class="f" style="left:875px;top:590px;width:73px;height:19px;line-height:17px;">12350</div>
<div style="left:955.67px;top:593px;height:14px;line-height:14px;font-size:11px;color:#222;">-</div>
<div class="f" style="left:970px;top:590px;width:72px;height:19px;line-height:17px;"></div>
<div class="f" style="left:576px;top:611px;width:466px;height:19px;line-height:17px;">sally@sally.com</div>
<div style="left:1171.50px;top:494.4px;height:13px;line-height:13px;font-size:10.1px;font-weight:bold;letter-spacing:0.094px;color:#111;">Manager</div>
<div style="left:1164.00px;top:506.2px;height:13px;line-height:13px;font-size:10.1px;font-weight:bold;letter-spacing:-0.100px;color:#111;">Contact ID</div>
<div class="f fc" style="left:1225px;top:495px;width:67px;height:22px;line-height:20px;color:#2e6da8;font-weight:bold;font-size:10.7px;padding-top:0;">7</div>
<div class="gb gb2" style="left:1297px;top:496px;width:31px;height:19px;"></div>
<div style="left:1304.99px;top:499px;height:13px;line-height:13px;font-size:10.3px;font-weight:bold;color:#eef6dc;text-shadow:0 0 2px rgba(255,255,255,.35);">go!</div>
<div class="gb gb2" style="left:1164px;top:535.5px;width:164px;height:20.5px;"></div>
<div style="left:1214.30px;top:538.5px;height:15px;line-height:15px;font-size:11.4px;font-weight:bold;letter-spacing:0.145px;color:#f2f9e2;text-shadow:0 0 2px rgba(255,255,255,.35);">Create New</div>
<div style="left:1064.24px;top:569.5px;height:13px;line-height:13px;font-size:10.1px;font-weight:bold;color:#111;">Work AC/Phone</div>
<div class="f" style="left:1148px;top:566px;width:58px;height:19px;line-height:17px;">781</div>
<div class="f" style="left:1209px;top:566px;width:123px;height:19px;line-height:17px;">899-5344</div>
<div style="left:1070.79px;top:591px;height:13px;line-height:13px;font-size:10.1px;font-weight:bold;color:#111;">Cell AC/Phone</div>
<div class="f" style="left:1148px;top:588px;width:58px;height:19px;line-height:17px;"></div>
<div class="f" style="left:1209px;top:588px;width:123px;height:19px;line-height:17px;"></div>
<div style="left:1061.25px;top:612px;height:13px;line-height:13px;font-size:10.1px;font-weight:bold;color:#111;">Home AC/Phone</div>
<div class="f" style="left:1148px;top:609px;width:58px;height:19px;line-height:17px;"></div>
<div class="f" style="left:1209px;top:609px;width:123px;height:19px;line-height:17px;"></div>
</div></body></html>
